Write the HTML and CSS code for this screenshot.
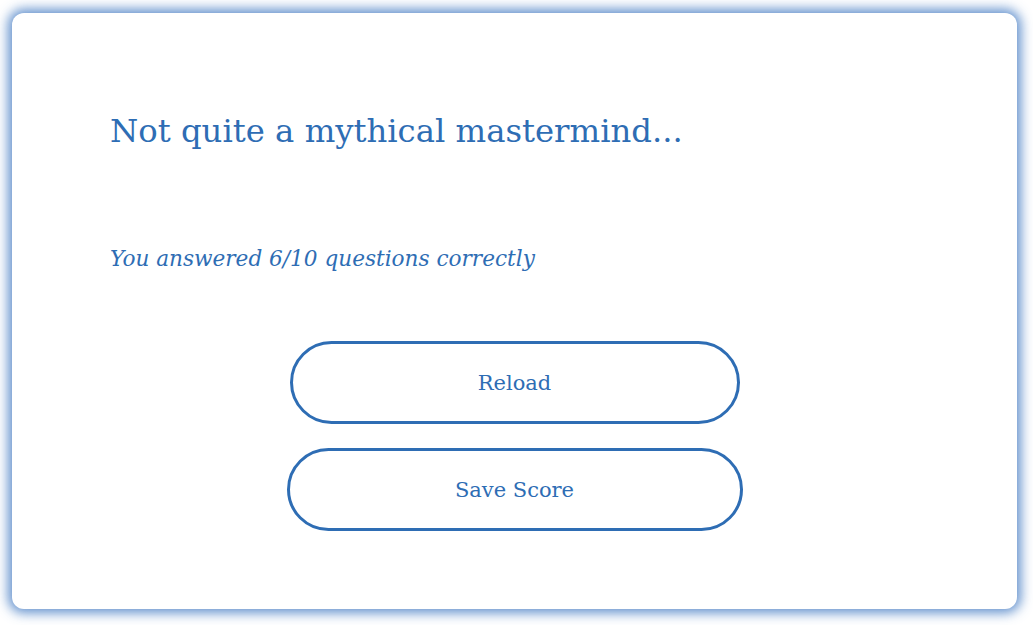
FILE: index.html
```html
<!DOCTYPE html>
<html>
<head>
<meta charset="utf-8">
<link rel="stylesheet" href="styles.css">
</head>
<body>
<main class="card">
  <h1 class="title">Not quite a mythical mastermind...</h1>
  <p class="result">You answered 6/10 questions correctly</p>
  <div class="actions">
    <button class="btn">Reload</button>
    <button class="btn btn-wide">Save Score</button>
  </div>
</main>
</body>
</html>
```
FILE: styles.css
```css
html, body {
  margin: 0;
  padding: 0;
  background: #ffffff;
}
body {
  padding: 13px 16px 16px 12px;
  font-family: "DejaVu Serif", "Liberation Serif", serif;
  color: #2e6db4;
}
.card {
  box-sizing: border-box;
  width: 1005px;
  height: 596px;
  background: #fff;
  border-radius: 12px;
  box-shadow: 0 0 12px 4px rgba(60, 118, 192, 0.8);
  padding: 98px 98px 0 98px;
}
.title {
  margin: 0;
  font-size: 32.3px;
  font-weight: normal;
  line-height: 40px;
}
.result {
  margin: 93px 0 0 0;
  font-size: 21.6px;
  font-style: italic;
  line-height: 30px;
}
.actions {
  display: flex;
  flex-direction: column;
  align-items: center;
  gap: 24px;
  margin-top: 67px;
}
.btn {
  box-sizing: border-box;
  width: 450px;
  height: 83px;
  border: 3px solid #2e6db4;
  border-radius: 42px;
  background: #fff;
  color: #2e6db4;
  font-family: "DejaVu Serif", "Liberation Serif", serif;
  font-size: 21px;
}
.btn-wide {
  width: 456px;
}
```
